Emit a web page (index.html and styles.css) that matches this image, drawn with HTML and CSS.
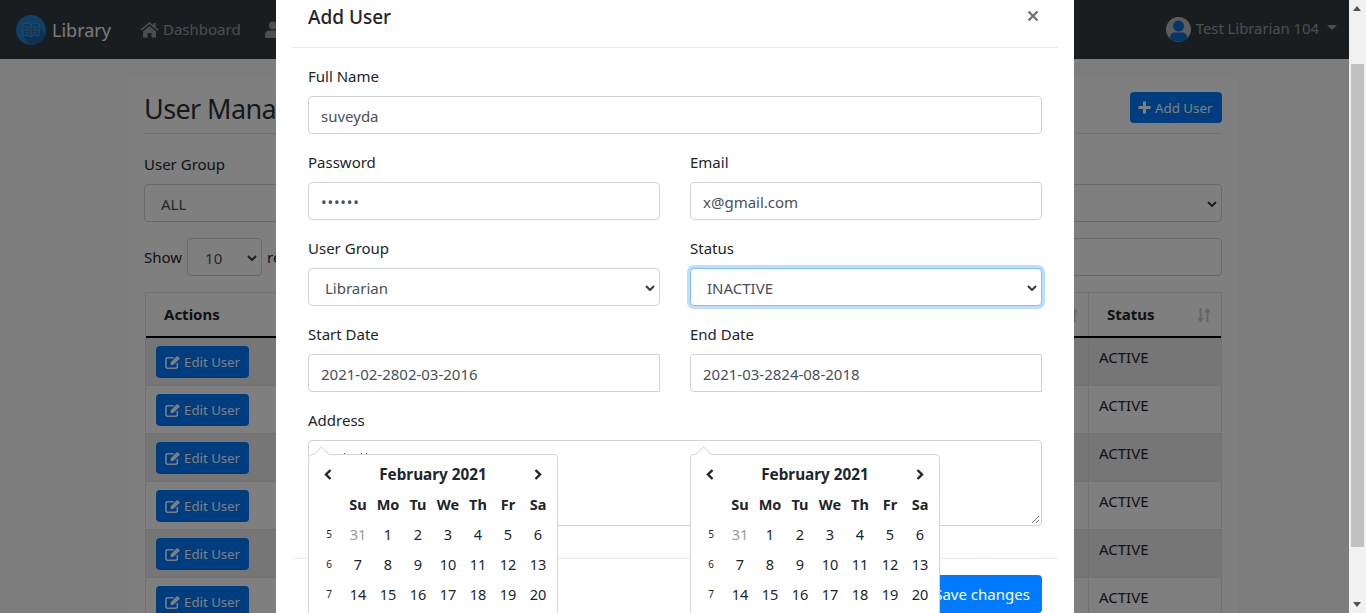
FILE: index.html
```html
<!DOCTYPE html>
<html lang="en">
<head>
    <meta charset="UTF-8">
    <title>Library</title>
    <link rel="stylesheet" href="styles.css">
</head>
<body>
<div id="app">
    <div id="viewport">
        <div id="navbar">
            <div class="brand">
                <svg class="logo" viewBox="0 0 30 30" width="30" height="30">
                    <circle cx="15" cy="15" r="15" fill="#1f84d6"/>
                    <path d="M7 21L8 9l14 0 7 11a15 15 0 0 1-15 10z" fill="#1766ab"/>
                    <path d="M7 9c3-1 6-1 8 1 2-2 5-2 8-1v12c-3-1-6-1-8 1-2-2-5-2-8-1z" fill="#1a70b8" stroke="#4f9fd8" stroke-width="1"/>
                    <path d="M15 10v12M9 12h4M9 15h4M9 18h4M17 12h4M17 15h4M17 18h4" stroke="#4f9fd8" stroke-width="1" fill="none"/>
                </svg>
                <span>Library</span>
            </div>
            <a class="nav-link">
                <svg width="19" height="17" viewBox="0 0 19 17"><path d="M9.500 1L0.500 8.600l1 1.200L9.500 3l8 6.800 1-1.200-3-2.600V2h-2v2.300zM3 10.500V16.500h4.500v-4.500h4v4.500H16V10.500L9.500 5z" fill="currentColor"/></svg>
                Dashboard
            </a>
            <a class="nav-link">
                <svg width="16" height="17" viewBox="0 0 16 17"><circle cx="8" cy="4.500" r="4" fill="currentColor"/><path d="M0 17v-3c0-3 2-4.500 4-4.500h8c2 0 4 1.500 4 4.500v3z" fill="currentColor"/></svg>
            </a>
            <div class="nav-user">
                <svg width="25" height="25" viewBox="0 0 25 25">
                    <circle cx="12.500" cy="12.500" r="12.500" fill="#bbb"/>
                    <circle cx="12.500" cy="9" r="5.500" fill="#0a6ccc"/>
                    <path d="M3.500 21c1-4 3-5.500 5-5.500h8c2 0 4 1.500 5 5.500a12.500 12.500 0 0 1-18 0z" fill="#0a6ccc"/>
                </svg>
                <span class="user-name">Test Librarian 104</span>
                <i class="caret"></i>
            </div>
        </div>

        <div id="page">
            <div class="card">
                <div class="page-head">
                    <h1>User Mana</h1>
                    <button class="btn btn-add">
                        <svg width="13" height="13" viewBox="0 0 13 13"><path d="M5 0.500h3V5h4.500v3H8v4.500H5V8H0.500V5H5z" fill="currentColor"/></svg>
                        Add User
                    </button>
                </div>
                <div class="filter">
                    <label>User Group</label>
                    <div class="fake-select group-select">ALL<svg class="chev" width="10" height="6" viewBox="0 0 10 6"><path d="M1 1l4 4 4-4" fill="none" stroke="currentColor" stroke-width="2"/></svg></div>
                </div>
                <div class="table-tools">
                    <span>Show</span>
                    <div class="fake-select len-select">10<svg class="chev" width="10" height="6" viewBox="0 0 10 6"><path d="M1 1l4 4 4-4" fill="none" stroke="currentColor" stroke-width="2"/></svg></div>
                    <span>re</span>
                    <div class="search-box"></div>
                </div>
                <div class="table">
                    <div class="tr thead">
                        <div class="td c-actions">Actions</div>
                        <div class="td c-mid"><svg class="sort" width="16" height="16" viewBox="0 0 16 16"><path d="M3.500 1v10H1L4.500 15.500 8 11H5.500V1zM10.500 15.500V5.500H8L11.500 1 15 5.500H12.500v10z" fill="currentColor"/></svg></div>
                        <div class="td c-status">Status<svg class="sort" width="16" height="16" viewBox="0 0 16 16"><path d="M3.500 1v10H1L4.500 15.500 8 11H5.500V1zM10.500 15.500V5.500H8L11.500 1 15 5.500H12.500v10z" fill="currentColor"/></svg></div>
                    </div>
                    <div class="tr odd"><div class="td c-actions"><button class="btn btn-edit"><svg width="18" height="16" viewBox="0 0 17 15"><path d="M13 8.500v4a1.500 1.500 0 0 1-1.500 1.500h-9A1.500 1.500 0 0 1 1 12.500v-8A1.500 1.500 0 0 1 2.500 3H9" fill="none" stroke="currentColor" stroke-width="1.600"/><path d="M6 7.800L13 1l2.800 2.700L8.800 10.600 6 11z" fill="currentColor"/></svg>Edit User</button></div><div class="td c-mid"></div><div class="td c-status">ACTIVE</div></div>
                    <div class="tr"><div class="td c-actions"><button class="btn btn-edit"><svg width="18" height="16" viewBox="0 0 17 15"><path d="M13 8.500v4a1.500 1.500 0 0 1-1.500 1.500h-9A1.500 1.500 0 0 1 1 12.500v-8A1.500 1.500 0 0 1 2.500 3H9" fill="none" stroke="currentColor" stroke-width="1.600"/><path d="M6 7.800L13 1l2.800 2.700L8.800 10.600 6 11z" fill="currentColor"/></svg>Edit User</button></div><div class="td c-mid"></div><div class="td c-status">ACTIVE</div></div>
                    <div class="tr odd"><div class="td c-actions"><button class="btn btn-edit"><svg width="18" height="16" viewBox="0 0 17 15"><path d="M13 8.500v4a1.500 1.500 0 0 1-1.500 1.500h-9A1.500 1.500 0 0 1 1 12.500v-8A1.500 1.500 0 0 1 2.500 3H9" fill="none" stroke="currentColor" stroke-width="1.600"/><path d="M6 7.800L13 1l2.800 2.700L8.800 10.600 6 11z" fill="currentColor"/></svg>Edit User</button></div><div class="td c-mid"></div><div class="td c-status">ACTIVE</div></div>
                    <div class="tr"><div class="td c-actions"><button class="btn btn-edit"><svg width="18" height="16" viewBox="0 0 17 15"><path d="M13 8.500v4a1.500 1.500 0 0 1-1.500 1.500h-9A1.500 1.500 0 0 1 1 12.500v-8A1.500 1.500 0 0 1 2.500 3H9" fill="none" stroke="currentColor" stroke-width="1.600"/><path d="M6 7.800L13 1l2.800 2.700L8.800 10.600 6 11z" fill="currentColor"/></svg>Edit User</button></div><div class="td c-mid"></div><div class="td c-status">ACTIVE</div></div>
                    <div class="tr odd"><div class="td c-actions"><button class="btn btn-edit"><svg width="18" height="16" viewBox="0 0 17 15"><path d="M13 8.500v4a1.500 1.500 0 0 1-1.500 1.500h-9A1.500 1.500 0 0 1 1 12.500v-8A1.500 1.500 0 0 1 2.500 3H9" fill="none" stroke="currentColor" stroke-width="1.600"/><path d="M6 7.800L13 1l2.800 2.700L8.800 10.600 6 11z" fill="currentColor"/></svg>Edit User</button></div><div class="td c-mid"></div><div class="td c-status">ACTIVE</div></div>
                    <div class="tr"><div class="td c-actions"><button class="btn btn-edit"><svg width="18" height="16" viewBox="0 0 17 15"><path d="M13 8.500v4a1.500 1.500 0 0 1-1.500 1.500h-9A1.500 1.500 0 0 1 1 12.500v-8A1.500 1.500 0 0 1 2.500 3H9" fill="none" stroke="currentColor" stroke-width="1.600"/><path d="M6 7.800L13 1l2.800 2.700L8.800 10.600 6 11z" fill="currentColor"/></svg>Edit User</button></div><div class="td c-mid"></div><div class="td c-status">ACTIVE</div></div>
                </div>
            </div>
        </div>

        <div id="backdrop"></div>

        <div id="modal">
            <div class="modal-head">
                <h5>Add User</h5>
                <svg class="close" width="12" height="12" viewBox="0 0 12 12"><path d="M1.500 1.500l9 9M10.500 1.500l-9 9" stroke="#6c757d" stroke-width="2.400" fill="none"/></svg>
            </div>
            <div class="modal-body">
                <div class="field">
                    <label>Full Name</label>
                    <div class="input">suveyda</div>
                </div>
                <div class="row">
                    <div class="field">
                        <label>Password</label>
                        <div class="input dots">••••••</div>
                    </div>
                    <div class="field">
                        <label>Email</label>
                        <div class="input">x@gmail.com</div>
                    </div>
                </div>
                <div class="row">
                    <div class="field">
                        <label>User Group</label>
                        <div class="input select">Librarian<svg class="chev" width="10" height="6" viewBox="0 0 10 6"><path d="M1 1l4 4 4-4" fill="none" stroke="currentColor" stroke-width="2"/></svg></div>
                    </div>
                    <div class="field">
                        <label>Status</label>
                        <div class="input select focused">INACTIVE<svg class="chev" width="10" height="6" viewBox="0 0 10 6"><path d="M1 1l4 4 4-4" fill="none" stroke="currentColor" stroke-width="2"/></svg></div>
                    </div>
                </div>
                <div class="row">
                    <div class="field">
                        <label>Start Date</label>
                        <div class="input square">2021-02-2802-03-2016</div>
                    </div>
                    <div class="field">
                        <label>End Date</label>
                        <div class="input square">2021-03-2824-08-2018</div>
                    </div>
                </div>
                <div class="field address">
                    <label>Address</label>
                    <div class="input textarea">
                        <!-- tops of the address text, the rest sits under the date picker -->
                        <svg class="ticks" width="24" height="3" viewBox="0 0 24 3"><path d="M0.500 0v3M17.500 0v3M22.500 0v3" stroke="#495057" stroke-width="1"/></svg>
                        <svg class="grip" width="9" height="9" viewBox="0 0 9 9"><path d="M1 8l7-7M5 8l3-3" stroke="#777" stroke-width="1"/></svg>
                    </div>
                </div>
            </div>
            <div class="modal-foot">
                <button class="btn btn-save">Save changes</button>
            </div>

            <div class="picker picker-start">
                <div class="pk-head"><svg width="8" height="11" viewBox="0 0 8 11"><path d="M6.500 1L2 5.500 6.500 10" fill="none" stroke="currentColor" stroke-width="2.400"/></svg><b>February 2021</b><svg width="8" height="11" viewBox="0 0 8 11"><path d="M1.500 1L6 5.500 1.500 10" fill="none" stroke="currentColor" stroke-width="2.400"/></svg></div>
                <div class="pk-grid pk-days"><span></span><b>Su</b><b>Mo</b><b>Tu</b><b>We</b><b>Th</b><b>Fr</b><b>Sa</b></div>
                <div class="pk-grid"><small>5</small><span class="muted">31</span><span>1</span><span>2</span><span>3</span><span>4</span><span>5</span><span>6</span></div>
                <div class="pk-grid"><small>6</small><span>7</span><span>8</span><span>9</span><span>10</span><span>11</span><span>12</span><span>13</span></div>
                <div class="pk-grid"><small>7</small><span>14</span><span>15</span><span>16</span><span>17</span><span>18</span><span>19</span><span>20</span></div>
            </div>
            <div class="picker picker-end">
                <div class="pk-head"><svg width="8" height="11" viewBox="0 0 8 11"><path d="M6.500 1L2 5.500 6.500 10" fill="none" stroke="currentColor" stroke-width="2.400"/></svg><b>February 2021</b><svg width="8" height="11" viewBox="0 0 8 11"><path d="M1.500 1L6 5.500 1.500 10" fill="none" stroke="currentColor" stroke-width="2.400"/></svg></div>
                <div class="pk-grid pk-days"><span></span><b>Su</b><b>Mo</b><b>Tu</b><b>We</b><b>Th</b><b>Fr</b><b>Sa</b></div>
                <div class="pk-grid"><small>5</small><span class="muted">31</span><span>1</span><span>2</span><span>3</span><span>4</span><span>5</span><span>6</span></div>
                <div class="pk-grid"><small>6</small><span>7</span><span>8</span><span>9</span><span>10</span><span>11</span><span>12</span><span>13</span></div>
                <div class="pk-grid"><small>7</small><span>14</span><span>15</span><span>16</span><span>17</span><span>18</span><span>19</span><span>20</span></div>
            </div>
        </div>
    </div>

    <div id="scrollbar">
        <div class="sb-arrow up"></div>
        <div class="sb-track"><div class="sb-thumb"></div></div>
        <div class="sb-arrow down"></div>
    </div>
</div>
</body>
</html>
```

FILE: styles.css
```css
* {
    box-sizing: border-box;
}

html, body {
    margin: 0;
    padding: 0;
    height: 613px;
    overflow: hidden;
}

body {
    font-family: "Noto Sans", "Open Sans", sans-serif;
    font-size: 15px;
    color: #212529;
    background-color: #fff;
}

#app {
    display: flex;
    height: 613px;
}

#viewport {
    position: relative;
    flex: 1;
    overflow: hidden;
    background-color: #f8fbf8;
}

/* navbar */
#navbar {
    display: flex;
    align-items: center;
    height: 59px;
    padding: 0 12px 0 16px;
    background-color: #343a40;
    color: #9a9da0;
}

.brand {
    display: flex;
    align-items: center;
    gap: 6px;
    font-size: 18px;
    color: #fff;
    opacity: 0.95;
    width: 124px;
}

.nav-link {
    display: flex;
    align-items: center;
    gap: 4px;
    font-size: 15px;
    line-height: 20px;
    margin-top: -1px;
    margin-right: 24px;
    color: rgba(255, 255, 255, 0.5);
}

.nav-user {
    margin-left: auto;
    display: flex;
    align-items: center;
    gap: 5px;
    font-size: 14.800px;
    line-height: 20px;
    color: rgba(255, 255, 255, 0.5);
}

.user-name {
    margin-top: -3px;
}

.caret {
    width: 0;
    height: 0;
    margin: -4px 0 0 3px;
    border-left: 5px solid transparent;
    border-right: 5px solid transparent;
    border-top: 5px solid rgba(255, 255, 255, 0.5);
}

/* page */
#page {
    padding: 18px 111px 0 128px;
}

.card {
    padding: 16px;
    background-color: #fff;
    border-radius: 5px;
    height: 700px;
}

.page-head {
    display: flex;
    justify-content: space-between;
    align-items: flex-start;
    height: 41px;
    border-bottom: 1px solid #dee2e6;
}

h1 {
    margin: 0;
    font-size: 27px;
    font-weight: 400;
    line-height: 32px;
    letter-spacing: -0.600px;
    color: #2c3136;
    white-space: nowrap;
}

.btn {
    border: none;
    border-radius: 4px;
    color: #fff;
    background-color: #007bff;
    font-family: inherit;
}

.btn-add {
    display: flex;
    align-items: center;
    gap: 4px;
    width: 92px;
    height: 31px;
    margin-top: -1px;
    padding: 0 8px;
    font-size: 13.300px;
    white-space: nowrap;
}

.filter {
    margin-top: 18px;
}

.filter label {
    display: block;
    height: 24px;
    line-height: 24px;
    margin-bottom: 8px;
}

.fake-select {
    position: relative;
    height: 38px;
    line-height: 38px;
    padding-left: 16px;
    border: 1px solid #ced4da;
    border-radius: 4px;
    background-color: #fff;
    color: #495057;
}

.chev {
    position: absolute;
    right: 4px;
    top: 16px;
    color: #343a40;
}

.table-tools {
    display: flex;
    align-items: center;
    gap: 5px;
    margin-top: 16px;
}

.len-select {
    width: 75px;
    padding-left: 17px;
}

.search-box {
    flex: 1;
    height: 38px;
    margin-left: 90px;
    border: 1px solid #ced4da;
    border-radius: 4px;
    background-color: #fff;
}

.table {
    margin-top: 16px;
    margin-left: 1px;
    border: 1px solid #dee2e6;
    border-bottom: none;
}

.tr {
    display: flex;
    height: 48px;
    border-bottom: 1px solid #dee2e6;
}

.thead {
    height: 45px;
    border-bottom: 2px solid #000;
    font-weight: 700;
}

.odd {
    background-color: #ececec;
}

.td {
    position: relative;
    padding: 12px 10px;
    border-right: 1px solid #dee2e6;
}

.c-actions {
    width: 200px;
    padding: 8px 10px;
}

.thead .c-actions {
    padding: 11px 18px;
}

.c-mid {
    flex: 1;
}

.c-status {
    width: 132px;
    border-right: none;
    padding: 9px 10px;
}

.thead .c-status {
    padding: 11px 18px;
}

.sort {
    position: absolute;
    right: 9px;
    top: 14px;
    color: #ccc;
}

.btn-edit {
    display: flex;
    align-items: center;
    gap: 3px;
    height: 32px;
    width: 93px;
    padding: 0 9px;
    font-size: 13.200px;
    white-space: nowrap;
}

#backdrop {
    position: absolute;
    inset: 0;
    background-color: rgba(0, 0, 0, 0.5);
}

/* modal */
#modal {
    position: absolute;
    left: 276px;
    top: -12px;
    width: 798px;
    height: 700px;
    padding: 0 16px;
    background-color: #fff;
}

.modal-head {
    display: flex;
    justify-content: space-between;
    align-items: flex-start;
    height: 60px;
    padding: 16px 16px 0;
    border-bottom: 1px solid #e9ecef;
}

h5 {
    margin: 0;
    font-size: 19px;
    font-weight: 500;
    line-height: 26px;
}

.close {
    margin: 6px 3px 0 0;
}

.modal-body {
    padding: 16px 16px 0;
    height: 511px;
    border-bottom: 1px solid #e9ecef;
}

.row {
    display: flex;
    gap: 30px;
}

.row .field {
    flex: 1;
}

.field {
    margin-bottom: 16px;
}

.field label {
    display: block;
    height: 24px;
    line-height: 24px;
    margin-bottom: 8px;
}

.input {
    position: relative;
    height: 38px;
    line-height: 38px;
    padding: 0 12px;
    border: 1px solid #ced4da;
    border-radius: 4px;
    color: #495057;
    background-color: #fff;
}

.dots {
    letter-spacing: 0.800px;
}

.square {
    border-radius: 4px 0 0 4px;
}

.select {
    padding-left: 16px;
}

.focused {
    border-color: #80bdff;
    box-shadow: 0 0 0 3px rgba(0, 123, 255, 0.25);
}

.textarea {
    height: 86px;
}

.ticks {
    position: absolute;
    left: 35px;
    top: 12px;
}

.grip {
    position: absolute;
    right: 1px;
    bottom: 1px;
}

.modal-foot {
    display: flex;
    justify-content: flex-end;
    padding: 16px;
}

.btn-save {
    width: 120px;
    height: 38px;
    font-size: 15px;
}

/* date pickers */
.picker {
    position: absolute;
    top: 466px;
    width: 250px;
    height: 240px;
    padding: 4px;
    background-color: #fff;
    border: 1px solid #d5d5dc;
    border-radius: 4px;
}

.picker::before {
    content: "";
    position: absolute;
    left: 6px;
    top: -7px;
    width: 12px;
    height: 12px;
    transform: rotate(45deg) scale(0.9);
    background-color: #fff;
    border-left: 1px solid #d5d5dc;
    border-top: 1px solid #d5d5dc;
}

.picker-start {
    left: 32px;
}

.picker-end {
    left: 414px;
}

.pk-head {
    display: flex;
    justify-content: space-between;
    align-items: center;
    height: 30px;
    padding: 0 11px;
    font-size: 15.300px;
}

.pk-grid {
    display: grid;
    grid-template-columns: 30px repeat(7, 30px);
    height: 30px;
    line-height: 30px;
    text-align: center;
    font-size: 14.500px;
}

.pk-grid small {
    font-size: 10px;
    padding-left: 2px;
}

.muted {
    color: #999;
}

/* browser scrollbar */
#scrollbar {
    display: flex;
    flex-direction: column;
    width: 17px;
    background-color: #f1f1f1;
}

.sb-arrow {
    height: 17px;
    position: relative;
}

.sb-arrow::after {
    content: "";
    position: absolute;
    left: 4px;
    top: 6px;
    border-left: 4px solid transparent;
    border-right: 4px solid transparent;
}

.up::after {
    border-bottom: 5px solid #505050;
}

.down::after {
    border-top: 5px solid #505050;
}

.sb-track {
    flex: 1;
    padding-top: 47px;
}

.sb-thumb {
    height: 483px;
    margin: 0 2px;
    background-color: #c1c1c1;
}
```
